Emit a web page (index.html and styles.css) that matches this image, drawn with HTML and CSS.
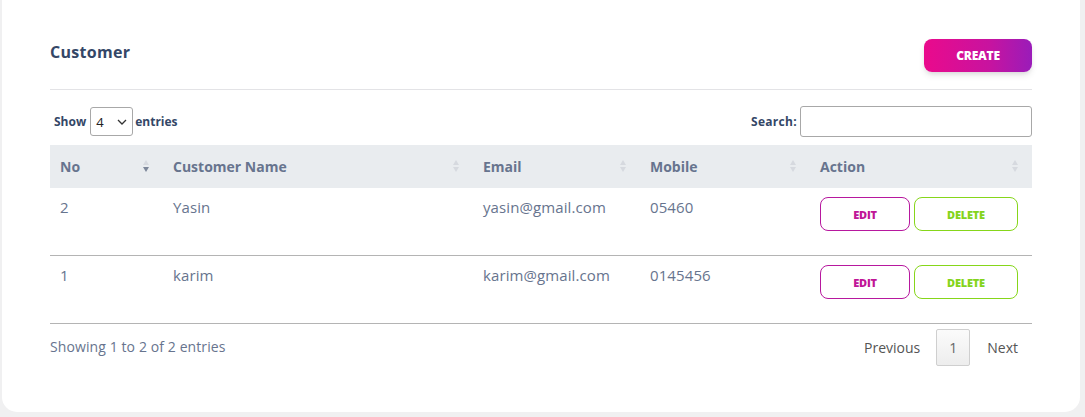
FILE: index.html
```html
<!DOCTYPE html>
<html>
<head>
<meta charset="utf-8">
<link rel="stylesheet" href="styles.css">
</head>
<body>
<div class="card">
  <div class="card-head">
    <h2 class="title">Customer</h2>
    <button class="btn-create">CREATE</button>
  </div>
  <div class="divider"></div>
  <div class="controls">
    <div class="length">
      <span class="lbl">Show</span>
      <div class="select"><span>4</span>
        <svg width="10" height="6" viewBox="0 0 10 6"><path d="M1 1 L5 5 L9 1" fill="none" stroke="#333" stroke-width="1.3"/></svg>
      </div>
      <span class="lbl">entries</span>
    </div>
    <div class="search">
      <span class="lbl">Search:</span>
      <div class="input"></div>
    </div>
  </div>
  <table class="tbl">
    <colgroup>
      <col class="c1"><col class="c2"><col class="c3"><col class="c4"><col class="c5">
    </colgroup>
    <thead>
      <tr>
        <th><div class="th-in"><span>No</span><span class="sort desc"><i class="up"></i><i class="down"></i></span></div></th>
        <th><div class="th-in"><span>Customer Name</span><span class="sort"><i class="up"></i><i class="down"></i></span></div></th>
        <th><div class="th-in"><span>Email</span><span class="sort"><i class="up"></i><i class="down"></i></span></div></th>
        <th><div class="th-in"><span>Mobile</span><span class="sort"><i class="up"></i><i class="down"></i></span></div></th>
        <th><div class="th-in"><span>Action</span><span class="sort"><i class="up"></i><i class="down"></i></span></div></th>
      </tr>
    </thead>
    <tbody>
      <tr>
        <td>2</td><td>Yasin</td><td>yasin@gmail.com</td><td>05460</td>
        <td><div class="actions"><button class="btn-edit">EDIT</button><button class="btn-del">DELETE</button></div></td>
      </tr>
      <tr>
        <td>1</td><td>karim</td><td>karim@gmail.com</td><td>0145456</td>
        <td><div class="actions"><button class="btn-edit">EDIT</button><button class="btn-del">DELETE</button></div></td>
      </tr>
    </tbody>
  </table>
  <div class="foot">
    <span class="info">Showing 1 to 2 of 2 entries</span>
    <div class="pager">
      <span class="pg">Previous</span>
      <span class="pg-num">1</span>
      <span class="pg">Next</span>
    </div>
  </div>
</div>
</body>
</html>
```

FILE: styles.css
```css
html, body {
  margin: 0;
  padding: 0;
  background: #f0f0f1;
}
body {
  font-family: "Open Sans", "Liberation Sans", sans-serif;
  color: #67748e;
  width: 1085px;
  height: 417px;
  overflow: hidden;
}
.card {
  margin-left: 2px;
  width: 1078px;
  height: 412px;
  box-sizing: border-box;
  background: #fff;
  border-radius: 0 0 15px 15px;
  padding: 39px 48px 0 48px;
}
.card-head {
  display: flex;
  justify-content: space-between;
  align-items: flex-start;
  height: 33px;
}
.title {
  margin: 2px 0 0 0;
  font-size: 16px;
  font-weight: 700;
  color: #344767;
  letter-spacing: 0.3px;
}
.btn-create {
  width: 108px;
  height: 33px;
  border: 0;
  border-radius: 8px;
  background: linear-gradient(90deg, #ea0a8c 0%, #c8139f 60%, #9a1cb9 100%);
  color: #fff;
  font-family: inherit;
  font-size: 12px;
  font-weight: 800;
  letter-spacing: -0.2px;
  box-shadow: 0 4px 7px -1px rgba(0,0,0,0.11), 0 2px 4px -1px rgba(0,0,0,0.07);
  padding: 0;
}
.divider {
  margin-top: 17px;
  height: 1px;
  background: #e3e3e6;
}
.controls {
  margin-top: 16px;
  display: flex;
  justify-content: space-between;
  align-items: center;
  height: 31px;
}
.length, .search {
  display: flex;
  align-items: center;
}
.lbl {
  font-size: 12px;
  font-weight: 700;
  color: #344767;
}
.length .lbl:first-child {
  margin-left: 4px;
  margin-right: 4px;
}
.length .lbl:last-child {
  margin-left: 2px;
}
.select {
  width: 43px;
  height: 29px;
  box-sizing: border-box;
  border: 1px solid #a8a8a8;
  border-radius: 3px;
  display: flex;
  align-items: center;
  justify-content: space-between;
  padding: 0 5px 0 5px;
  font-size: 13px;
  color: #222;
}
.search .lbl {
  margin-right: 3px;
  letter-spacing: 0.3px;
}
.input {
  width: 232px;
  height: 31px;
  box-sizing: border-box;
  border: 1px solid #a8a8a8;
  border-radius: 3px;
}
.tbl {
  margin-top: 8px;
  width: 982px;
  border-collapse: collapse;
  table-layout: fixed;
}
.c1 { width: 113px; }
.c2 { width: 310px; }
.c3 { width: 167px; }
.c4 { width: 170px; }
.c5 { width: 222px; }
th {
  background: #e9ecef;
  height: 43px;
  padding: 0 14px 0 10px;
  text-align: left;
  font-size: 14px;
  font-weight: 700;
  color: #67748e;
}
.th-in {
  display: flex;
  justify-content: space-between;
  align-items: center;
  margin-top: -1px;
}
.sort {
  display: flex;
  flex-direction: column;
  gap: 2px;
}
.sort i {
  display: block;
  width: 0;
  height: 0;
  border-left: 3.5px solid transparent;
  border-right: 3.5px solid transparent;
}
.sort .up { border-bottom: 5px solid #d6d9df; }
.sort .down { border-top: 5px solid #d6d9df; }
.sort.desc .down { border-top-color: #7d879a; }
td {
  vertical-align: top;
  padding: 9px 10px 24px 10px;
  font-size: 15px;
  line-height: 20px;
  letter-spacing: 0.1px;
  color: #67748e;
  border-bottom: 1px solid #b4b4b4;
}
.actions {
  display: flex;
  gap: 4px;
}
.btn-edit, .btn-del {
  height: 34px;
  box-sizing: border-box;
  background: #fff;
  border-radius: 8px;
  font-family: inherit;
  font-size: 11px;
  font-weight: 800;
  padding: 0;
  letter-spacing: -0.2px;
}
.btn-edit {
  width: 90px;
  border: 1px solid #b7189e;
  color: #c01697;
}
.btn-del {
  width: 104px;
  border: 1px solid #86d61a;
  color: #84d41c;
}
.foot {
  display: flex;
  justify-content: space-between;
  align-items: flex-start;
  margin-top: 5px;
}
.info {
  font-size: 14px;
  line-height: 19px;
  padding-top: 8px;
  color: #67748e;
  letter-spacing: 0.1px;
}
.pager {
  display: flex;
  align-items: center;
  margin-right: 14px;
}
.pg {
  font-size: 14px;
  color: #555;
  margin-top: -1px;
}
.pg-num {
  width: 34px;
  height: 37px;
  box-sizing: border-box;
  border: 1px solid #cfcfcf;
  border-radius: 2px;
  background: linear-gradient(#fbfbfb, #ededed);
  display: flex;
  align-items: center;
  justify-content: center;
  font-size: 14px;
  color: #666;
  margin: 0 17px 0 16px;
}
```
